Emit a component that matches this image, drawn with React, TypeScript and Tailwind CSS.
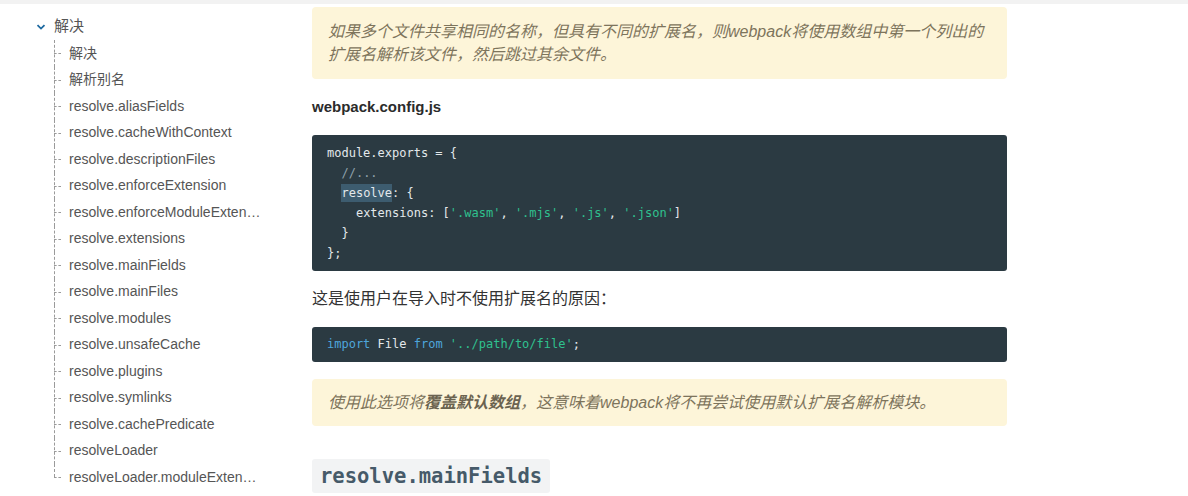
import React from "react";

const items = [
  "解决",
  "解析别名",
  "resolve.aliasFields",
  "resolve.cacheWithContext",
  "resolve.descriptionFiles",
  "resolve.enforceExtension",
  "resolve.enforceModuleExtension",
  "resolve.extensions",
  "resolve.mainFields",
  "resolve.mainFiles",
  "resolve.modules",
  "resolve.unsafeCache",
  "resolve.plugins",
  "resolve.symlinks",
  "resolve.cachePredicate",
  "resolveLoader",
  "resolveLoader.moduleExtensions",
];

const sans = "font-['Liberation_Sans','Noto_Sans_CJK_SC',sans-serif]";
const mono = "font-['DejaVu_Sans_Mono',monospace]";

function Sidebar() {
  return (
    <div className={`w-[312px] shrink-0 pt-[9px] ${sans} text-[14px] text-[#555]`}>
      <div className="flex h-[27px] items-center pl-[36px]">
        <svg width="10" height="10" viewBox="0 0 10 10" className="mr-[8px]">
          <path d="M1.5 3.2 L5 6.6 L8.5 3.2" fill="none" stroke="#1d69a0" strokeWidth="1.8" />
        </svg>
        <span className="text-[15px]">解决</span>
      </div>
      <ul className="ml-[54px]">
        {items.map((t, i) => {
          const last = i === items.length - 1;
          return (
            <li key={i} className="flex h-[26.5px] items-center">
              <span className="relative w-[15px] self-stretch">
                <span
                  className={`absolute left-0 top-0 border-l border-dashed border-[#9a9a9a] ${
                    last ? "h-1/2" : "h-full"
                  }`}
                />
                <span className="absolute left-0 top-1/2 w-[7px] border-t border-dashed border-[#9a9a9a]" />
              </span>
              <span className="w-[193px] truncate">{t}</span>
            </li>
          );
        })}
      </ul>
    </div>
  );
}

function Main() {
  return (
    <div className={`w-[695px] shrink-0 ${sans} text-[16px] text-[#333]`}>
      <div className="mt-[3px] rounded-[4px] bg-[#fdf5d9] px-4 py-[13px] italic leading-[23px] text-[#7d745c]">
        如果多个文件共享相同的名称，但具有不同的扩展名，则webpack将使用数组中第一个列出的
        <br />
        扩展名解析该文件，然后跳过其余文件。
      </div>
      <div className="mt-[17px] text-[15px] font-bold leading-[22px] text-[#2b2b2b]">webpack.config.js</div>
      <pre
        className={`mt-[17px] rounded-[3px] bg-[#2b3a42] py-2 pl-[15px] ${mono} text-[12px] leading-[20px] text-[#e3e8eb]`}
      >
        <div>module.exports = {"{"}</div>
        <div>
          {"  "}
          <span className="text-[#8fa1ab]">//...</span>
        </div>
        <div>
          {"  "}
          <span className="bg-[#3d5c6f] py-[2px]">resolve</span>: {"{"}
        </div>
        <div>
          {"    "}extensions: [<span className="text-[#2fc18f]">'.wasm'</span>,{" "}
          <span className="text-[#2fc18f]">'.mjs'</span>, <span className="text-[#2fc18f]">'.js'</span>,{" "}
          <span className="text-[#2fc18f]">'.json'</span>]
        </div>
        <div>{"  }"}</div>
        <div>{"};"}</div>
      </pre>
      <p className="mt-[16px] leading-[24px] text-[#333]">这是使用户在导入时不使用扩展名的原因：</p>
      <pre
        className={`mt-[16px] rounded-[3px] bg-[#2b3a42] py-2 pl-[15px] ${mono} text-[12px] leading-[19px] text-[#e3e8eb]`}
      >
        <span className="text-[#4ea6dc]">import</span> File <span className="text-[#4ea6dc]">from</span>{" "}
        <span className="text-[#2fc18f]">'../path/to/file'</span>;
      </pre>
      <div className="mt-[17px] rounded-[4px] bg-[#fdf5d9] px-4 py-3 italic leading-[23px] text-[#7d745c]">
        使用此选项将<b className="text-[#6b6350]">覆盖默认数组</b>，这意味着webpack将不再尝试使用默认扩展名解析模块。
      </div>
      <div className="mt-[33px]">
        <span
          className={`inline-block rounded-[3px] bg-[#f2f3f4] px-[8px] py-[3px] ${mono} text-[20.5px] font-bold leading-[28px] text-[#465a69]`}
        >
          resolve.mainFields
        </span>
      </div>
    </div>
  );
}

export default function App() {
  return (
    <div className="h-[496px] w-[1188px] overflow-hidden bg-white">
      <div className="h-[4px] bg-[#f2f2f2]" />
      <div className="flex">
        <Sidebar />
        <Main />
      </div>
    </div>
  );
}
